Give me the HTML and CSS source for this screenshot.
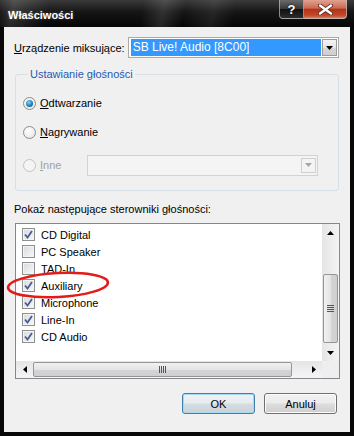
FILE: index.html
```html
<!DOCTYPE html>
<html lang="pl">
  <head>
    <meta charset="UTF-8" />
    <title>Właściwości</title>
    <link rel="stylesheet" href="styles.css">
  </head>
  <body>
    <div class="window">
      <!-- pasek tytułu -->
      <div class="titlebar">
        <span class="title">Właściwości</span>
        <div class="caption">
          <span class="cap-btn cap-help">?</span>
          <span class="cap-btn cap-close">
            <svg width="15" height="11" viewBox="0 0 15 11">
              <path d="M2 1.5 L13 9.5 M13 1.5 L2 9.5" stroke="#5a2418" stroke-width="4" stroke-linecap="round" />
              <path d="M2 1.5 L13 9.5 M13 1.5 L2 9.5" stroke="#fff" stroke-width="2.4" stroke-linecap="round" />
            </svg>
          </span>
        </div>
      </div>

      <div class="client">
        <div class="device-row">
          <span class="device-label"><u>U</u>rządzenie miksujące:</span>
          <div class="combo">
            <span class="combo-text">SB Live! Audio [8C00]</span>
            <span class="combo-btn">
              <svg width="7" height="4" viewBox="0 0 7 4"><path d="M0 0 H7 L3.5 4 Z" fill="#000" /></svg>
            </span>
          </div>
        </div>

        <fieldset class="group">
          <legend>Ustawianie głośności</legend>
          <div class="radio-row">
            <span class="radio checked"></span>
            <span><u>O</u>dtwarzanie</span>
          </div>
          <div class="radio-row">
            <span class="radio"></span>
            <span><u>N</u>agrywanie</span>
          </div>
          <div class="radio-row other disabled">
            <span class="radio"></span>
            <span class="other-label"><u>I</u>nne</span>
            <div class="combo-off">
              <span class="combo-btn off">
                <svg width="7" height="4" viewBox="0 0 7 4"><path d="M0 0 H7 L3.5 4 Z" fill="#a6a6a6" /></svg>
              </span>
            </div>
          </div>
        </fieldset>

        <div class="list-label">Pokaż następujące sterowniki głośności:</div>

        <div class="listbox">
          <div class="list-items">
            <div class="item"><span class="check on"></span>CD Digital</div>
            <div class="item"><span class="check"></span>PC Speaker</div>
            <div class="item"><span class="check"></span>TAD-In</div>
            <div class="item"><span class="check on"></span>Auxiliary</div>
            <div class="item"><span class="check on"></span>Microphone</div>
            <div class="item"><span class="check on"></span>Line-In</div>
            <div class="item"><span class="check on"></span>CD Audio</div>
          </div>
          <div class="vscroll">
            <span class="arrow"><svg width="7" height="4" viewBox="0 0 7 4"><path d="M3.5 0 L7 4 H0 Z" /></svg></span>
            <span class="thumb-v"><span class="grip-v"></span></span>
            <span class="arrow"><svg width="7" height="4" viewBox="0 0 7 4"><path d="M0 0 H7 L3.5 4 Z" /></svg></span>
          </div>
          <div class="hscroll">
            <span class="arrow"><svg width="4" height="7" viewBox="0 0 4 7"><path d="M4 0 V7 L0 3.5 Z" /></svg></span>
            <span class="thumb-h"><span class="grip-h"></span></span>
            <span class="arrow"><svg width="4" height="7" viewBox="0 0 4 7"><path d="M0 0 L4 3.5 L0 7 Z" /></svg></span>
          </div>
          <div class="corner"></div>
        </div>

        <div class="buttons">
          <button class="btn btn-default">OK</button>
          <button class="btn">Anuluj</button>
        </div>
      </div>

      <!-- zaznaczenie na zrzucie -->
      <svg class="mark" width="354" height="436" viewBox="0 0 354 436">
        <ellipse cx="58" cy="285" rx="50" ry="12" transform="rotate(-3 58 285)" fill="none" stroke="#e41b1b" stroke-width="2.6" />
      </svg>
    </div>
  </body>
</html>
```

FILE: styles.css
```css
/* podstawa */
body {
  margin: 0;
  font-family: "Liberation Sans", Arial, sans-serif;
  font-size: 11px;
  color: #000;
  background: #fff;
}

.window {
  position: relative;
  width: 354px;
  height: 436px;
  display: flex;
  flex-direction: column;
  background: #080808;
  overflow: hidden;
}

/* pasek tytułu */
.titlebar {
  height: 27px;
  flex: none;
  display: flex;
  justify-content: space-between;
  align-items: flex-start;
  padding: 0 7px 0 8px;
  background:
    linear-gradient(100deg, transparent 0, rgba(255, 255, 255, 0.14) 4%, transparent 14%, transparent 40%, rgba(255, 255, 255, 0.12) 46%, transparent 52%, rgba(255, 255, 255, 0.08) 60%, transparent 66%),
    linear-gradient(#3a3a3a, #151515 45%, #050505);
}

.title {
  color: #fff;
  font-weight: bold;
  font-size: 11px;
  line-height: 13px;
  margin-top: 9px;
  text-shadow: 0 0 3px rgba(255, 255, 255, 0.25);
}

.caption {
  display: flex;
}

.cap-btn {
  height: 19px;
  box-sizing: border-box;
  display: flex;
  align-items: center;
  justify-content: center;
  border: 1px solid rgba(190, 190, 190, 0.7);
  border-top: none;
}

.cap-help {
  width: 25px;
  border-radius: 0 0 0 4px;
  color: #fff;
  font-weight: bold;
  font-size: 13px;
  background: linear-gradient(#6a6a6a, #3a3a3a 48%, #111 52%, #2c2c2c);
  text-shadow: 0 0 2px #000;
}

.cap-close {
  width: 43px;
  border-left: none;
  border-radius: 0 0 4px 0;
  background: linear-gradient(#e2a190, #cc6a55 45%, #b23214 52%, #c4482a 85%, #d77a5c);
}

/* obszar okna */
.client {
  flex: 1;
  margin: 0 4px 4px;
  padding: 10px 11px 0 10px;
  background: #f0f0f0;
  display: flex;
  flex-direction: column;
}

.device-row {
  display: flex;
  align-items: center;
  height: 21px;
}

.device-label {
  width: 114px;
}

.combo {
  width: 212px;
  height: 21px;
  box-sizing: border-box;
  border: 1px solid #a9a9a9;
  background: #fff;
  display: flex;
  padding: 1px 1px 1px 2px;
  gap: 1px;
}

.combo-text {
  flex: 1;
  background: #3399ff;
  color: #fff;
  line-height: 17px;
  padding-left: 2px;
  font-size: 12px;
}

.combo-btn {
  width: 15px;
  box-sizing: border-box;
  border: 1px solid #9c9c9c;
  background: linear-gradient(#f4f4f4, #e6e6e6 50%, #d6d6d6 51%, #cfcfcf);
  display: flex;
  align-items: center;
  justify-content: center;
}

.combo-btn.off {
  height: 15px;
  border-color: #cfcfcf;
  background: #f4f4f4;
}

/* grupa */
.group {
  margin: 10px 0 0 1px;
  padding: 12px 0 14px 7px;
  border: 1px solid #d5dfe5;
  border-radius: 3px;
}

.group legend {
  padding: 0 2px;
  margin-left: 5px;
  color: #1c5bb0;
  line-height: 13px;
}

.radio-row {
  display: flex;
  align-items: center;
  height: 20px;
}

.radio-row + .radio-row {
  margin-top: 9px;
}

.radio-row.other {
  height: 22px;
  margin-top: 12px;
}

.radio {
  width: 13px;
  height: 13px;
  box-sizing: border-box;
  border-radius: 50%;
  border: 1px solid #8c8c8c;
  background: radial-gradient(circle at 40% 35%, #fff, #e2e2e2);
  margin-right: 4px;
  position: relative;
}

.radio.checked::after {
  content: "";
  position: absolute;
  left: 2px;
  top: 2px;
  width: 7px;
  height: 7px;
  border-radius: 50%;
  background: radial-gradient(circle at 40% 35%, #8fd4f2, #1f7fb8 55%, #0c4c7a);
}

.disabled {
  color: #a0a0a0;
}

.disabled .radio {
  border-color: #c4c4c4;
  background: #f4f4f4;
}

.other-label {
  width: 47px;
}

.combo-off {
  width: 231px;
  height: 21px;
  box-sizing: border-box;
  border: 1px solid #d2d2d2;
  background: #f4f4f4;
  display: flex;
  justify-content: flex-end;
  align-items: center;
  padding-right: 1px;
}

/* lista */
.list-label {
  margin-top: 12px;
  line-height: 13px;
}

.listbox {
  margin: 7px 0 0 1px;
  width: 325px;
  height: 156px;
  box-sizing: border-box;
  border: 1px solid #828790;
  background: #fff;
  display: grid;
  grid-template-columns: 1fr 17px;
  grid-template-rows: 1fr 17px;
}

.list-items {
  padding: 2px 0 0 6px;
}

.item {
  height: 17px;
  display: flex;
  align-items: center;
}

.check {
  width: 13px;
  height: 13px;
  box-sizing: border-box;
  border: 1px solid #8e8f8f;
  background: linear-gradient(135deg, #d6dae0, #f8f8f8);
  margin-right: 6px;
  box-shadow: inset 0 0 0 1px #f4f4f4;
}

.check.on {
  background:
    url("data:image/svg+xml,%3Csvg xmlns='http://www.w3.org/2000/svg' width='11' height='11'%3E%3Cpath d='M2 5.5 L4.5 8.5 L9 2' fill='none' stroke='%234a5d92' stroke-width='1.8'/%3E%3C/svg%3E") center / 11px 11px no-repeat,
    linear-gradient(135deg, #d6dae0, #f8f8f8);
}

.vscroll,
.hscroll,
.corner {
  background: #eeeeee;
}

.vscroll {
  display: flex;
  flex-direction: column;
  align-items: center;
  background: linear-gradient(90deg, #e5e5e5, #f4f4f4);
}

.hscroll {
  display: flex;
  align-items: center;
  background: linear-gradient(#e5e5e5, #f4f4f4);
}

.arrow {
  width: 17px;
  height: 17px;
  flex: none;
  display: flex;
  align-items: center;
  justify-content: center;
}

.arrow svg {
  fill: #000;
}

.thumb-v {
  width: 15px;
  height: 69px;
  margin-top: auto;
  margin-bottom: 1px;
  box-sizing: border-box;
  border: 1px solid #969696;
  border-radius: 2px;
  background: linear-gradient(90deg, #f1f1f1, #e4e4e4 50%, #d4d4d4 51%, #cfcfcf);
  display: flex;
  align-items: center;
  justify-content: center;
}

.grip-v {
  width: 7px;
  height: 7px;
  background: repeating-linear-gradient(#555 0 1px, transparent 1px 2px);
}

.thumb-h {
  width: 259px;
  height: 15px;
  margin-right: auto;
  box-sizing: border-box;
  border: 1px solid #969696;
  border-radius: 2px;
  background: linear-gradient(#f1f1f1, #e4e4e4 50%, #d4d4d4 51%, #cfcfcf);
  display: flex;
  align-items: center;
  justify-content: center;
}

.grip-h {
  width: 7px;
  height: 7px;
  background: repeating-linear-gradient(90deg, #555 0 1px, transparent 1px 2px);
}

/* przyciski */
.buttons {
  display: flex;
  justify-content: flex-end;
  gap: 9px;
  margin: 14px 2px 0 0;
}

.btn {
  width: 73px;
  height: 21px;
  box-sizing: border-box;
  border: 1px solid #707070;
  border-radius: 3px;
  background: linear-gradient(#f2f2f2, #ebebeb 48%, #dddddd 52%, #cfcfcf);
  box-shadow: inset 0 0 0 1px #fcfcfc;
  font-family: "Liberation Sans", Arial, sans-serif;
  font-size: 11px;
  color: #000;
  padding: 0;
}

.btn-default {
  border-color: #3c7fb1;
  background: linear-gradient(#f0f3f5, #e6ebee 48%, #d6dde2 52%, #cbd3d8);
  box-shadow: inset 0 0 0 1px #a8d8f2;
}

/* czerwona obwódka */
.mark {
  position: absolute;
  left: 0;
  top: 0;
  pointer-events: none;
}
```
